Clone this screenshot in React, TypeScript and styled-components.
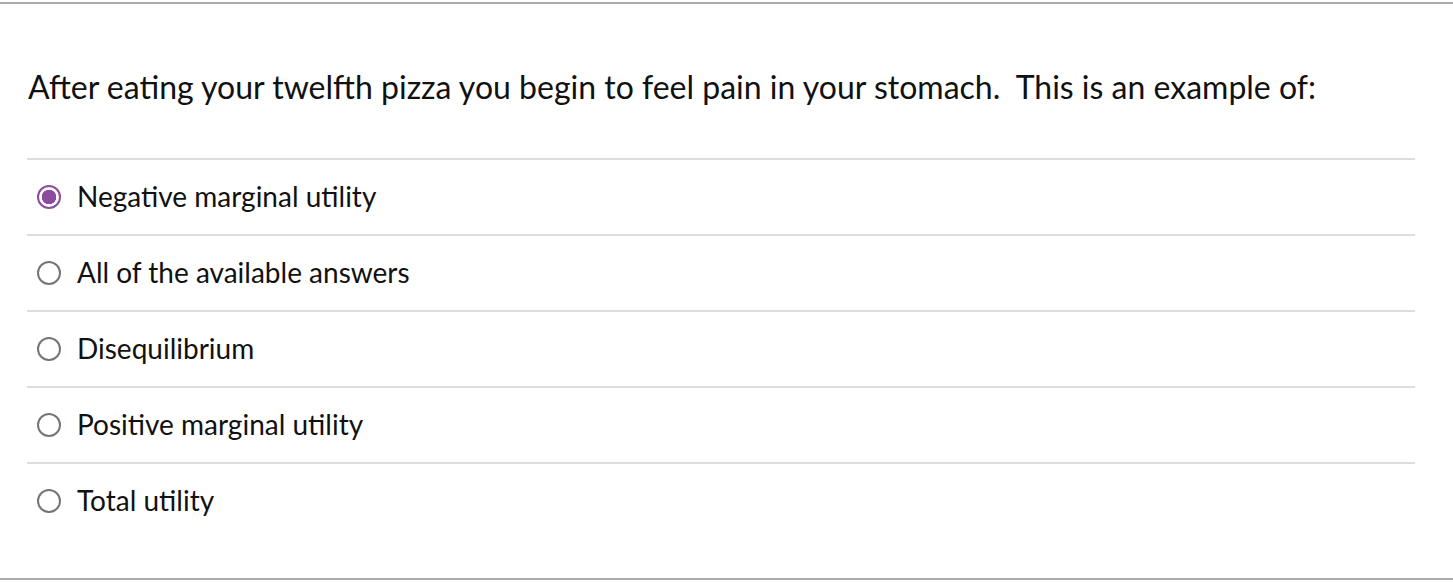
import React from "react";
import styled, { createGlobalStyle } from "styled-components";

const Global = createGlobalStyle`
  html, body { margin: 0; padding: 0; background: #fff; }
  body { font-family: Lato, "Open Sans", sans-serif; color: #111; }
`;

const Frame = styled.div`
  margin-top: 2px;
  border-top: 2px solid #aaaaaa;
  border-bottom: 2px solid #aaaaaa;
  padding: 0 38px 39px 27px;
  height: 578px;
  box-sizing: border-box;
`;

const Question = styled.p`
  margin: 0;
  height: 154px;
  display: flex;
  align-items: center;
  padding-left: 1px;
  padding-top: 12px;
  box-sizing: border-box;
  font-size: 32px;
  line-height: 1.2;
  white-space: pre;
`;

const Options = styled.div`
  display: flex;
  flex-direction: column;
`;

const Option = styled.label`
  display: flex;
  align-items: center;
  gap: 16px;
  height: 76px;
  box-sizing: border-box;
  border-top: 2px solid #dddddd;
  padding: 0 0 3px 10px;
  font-size: 28px;
`;

const Radio = styled.span<{ $checked: boolean }>`
  width: 24px;
  height: 24px;
  margin-top: 3px;
  border-radius: 50%;
  box-sizing: border-box;
  flex: none;
  border: ${(p) => (p.$checked ? "2.5px solid #8c4b9e" : "2px solid #767676")};
  background: ${(p) =>
    p.$checked ? "radial-gradient(circle, #8c4b9e 0 7px, #fff 7.5px)" : "#fff"};
`;

const answers = [
  "Negative marginal utility",
  "All of the available answers",
  "Disequilibrium",
  "Positive marginal utility",
  "Total utility",
];

export default function App() {
  return (
    <>
      <Global />
      <Frame>
        <Question>
          {"After eating your twelfth pizza you begin to feel pain in your stomach.  This is an example of:"}
        </Question>
        <Options>
          {answers.map((a, i) => (
            <Option key={a}>
              <Radio $checked={i === 0} />
              {a}
            </Option>
          ))}
        </Options>
      </Frame>
    </>
  );
}
